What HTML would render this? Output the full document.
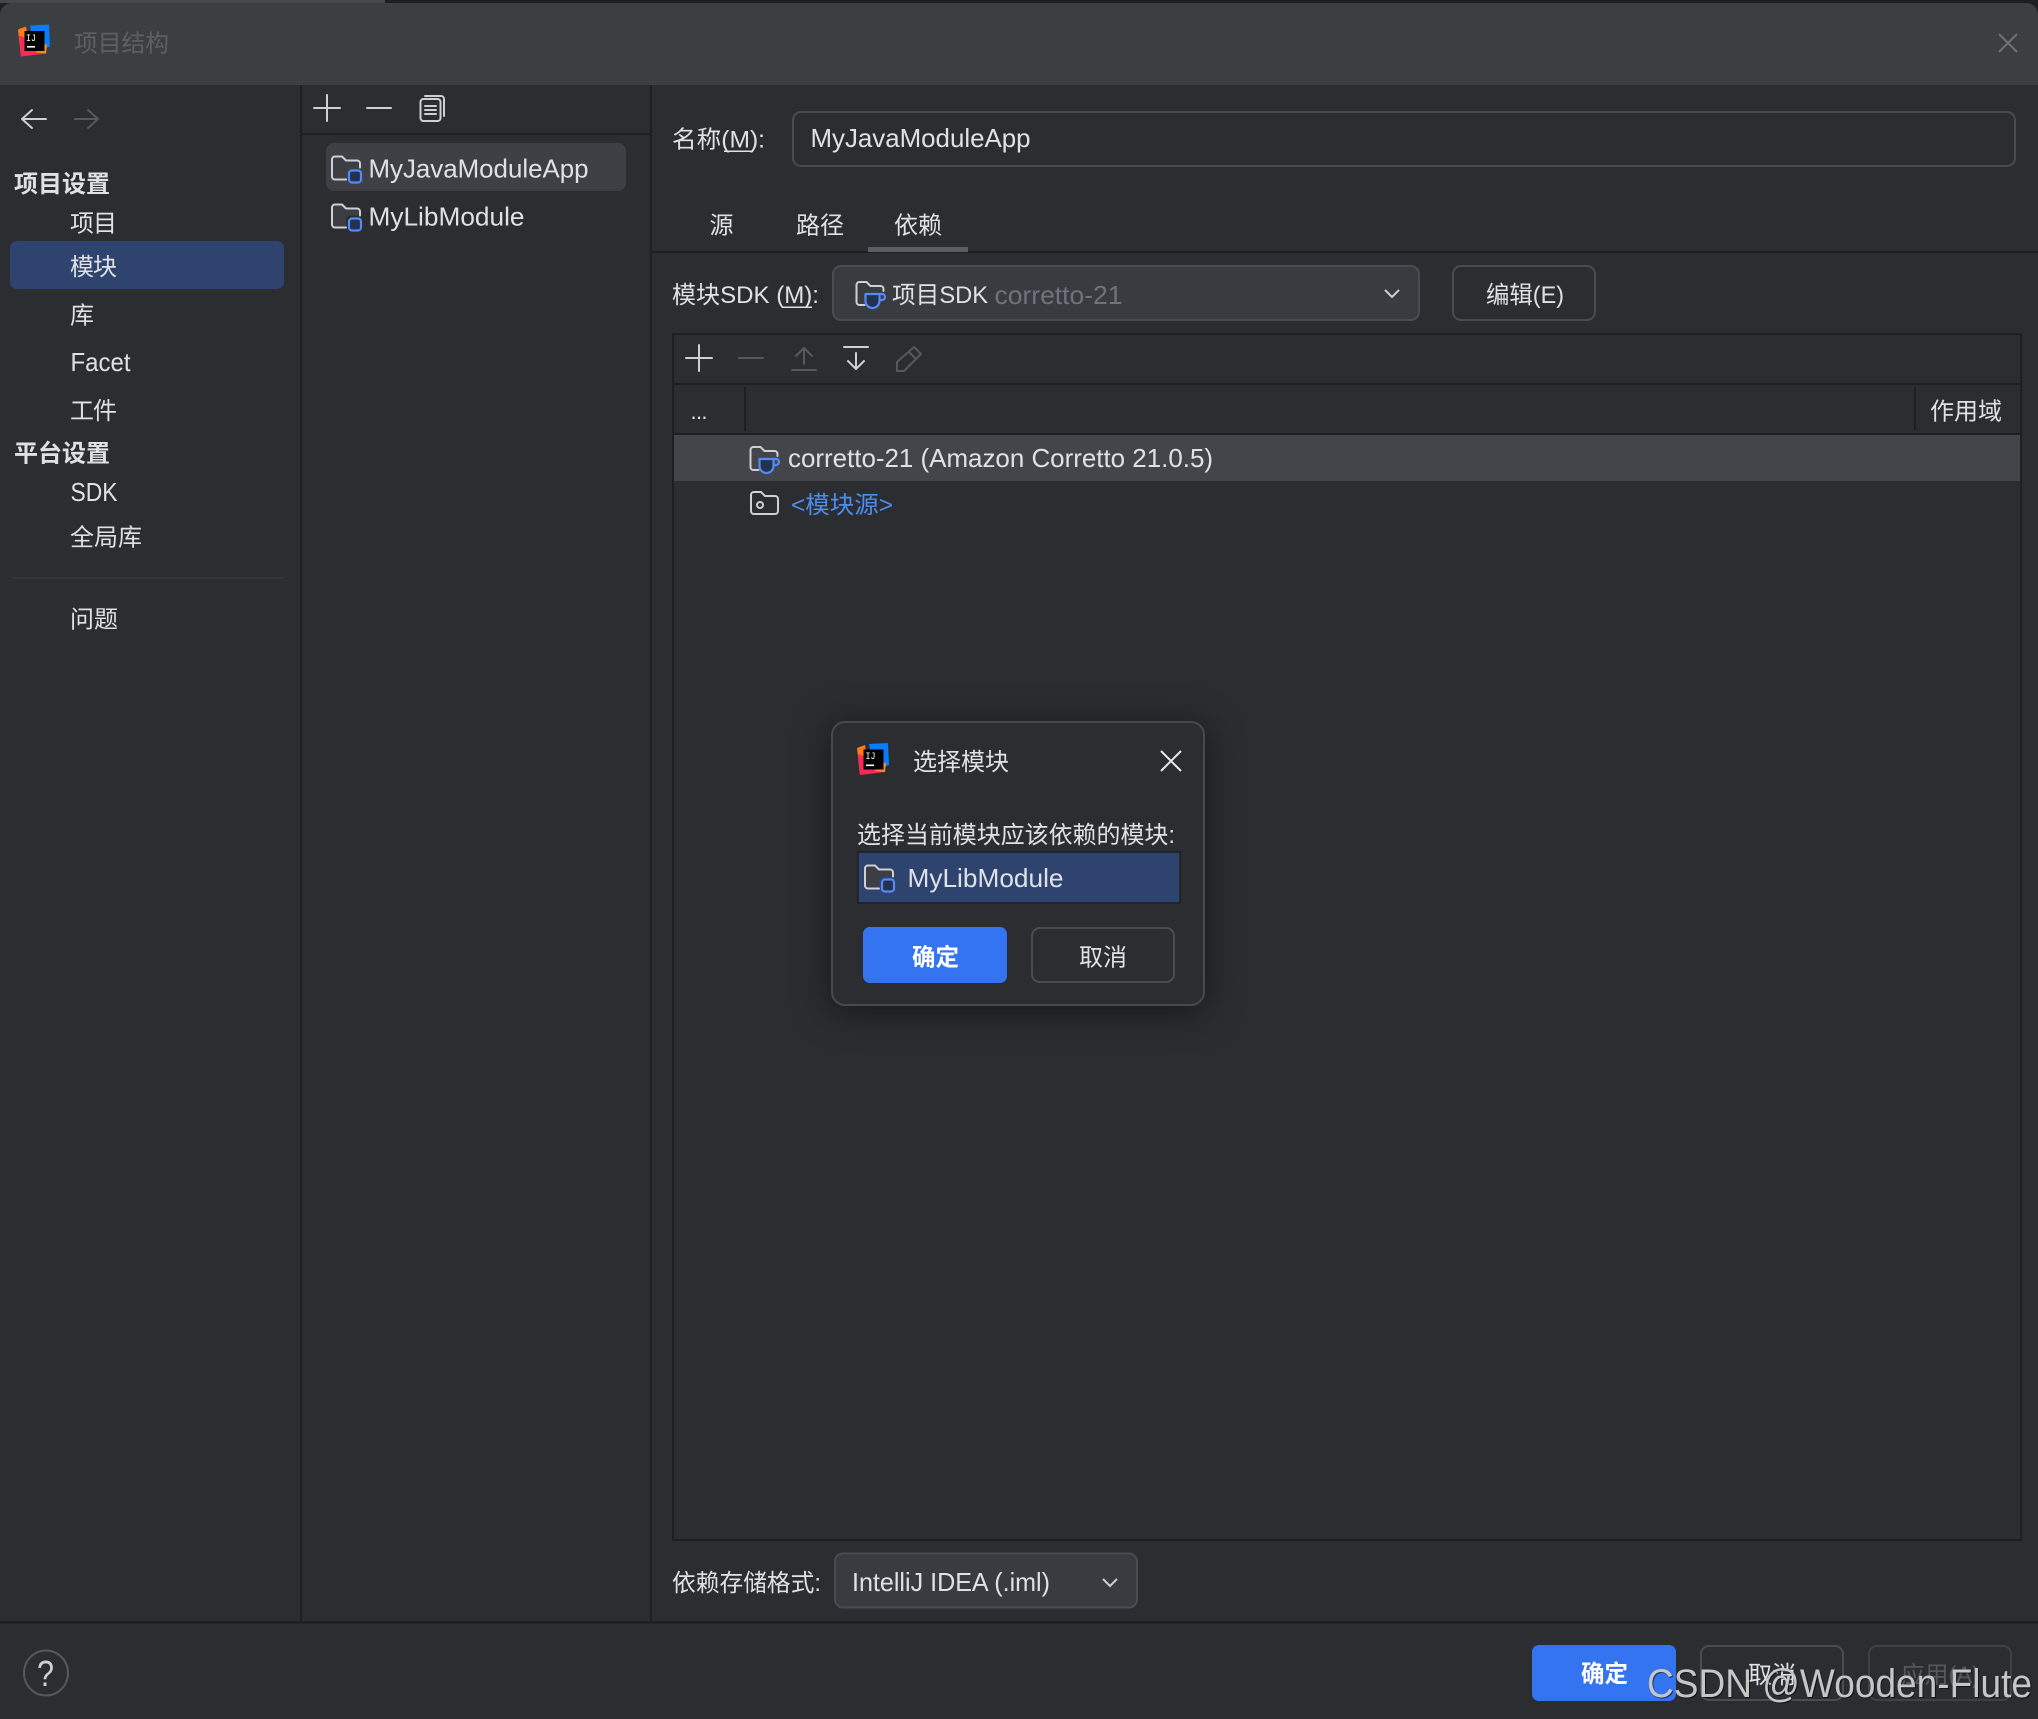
<!DOCTYPE html>
<html lang="zh-CN">
<head>
<meta charset="utf-8">
<title>项目结构</title>
<style>
html,body{margin:0;padding:0;background:#1e1f22;width:2038px;height:1719px;overflow:hidden}
svg{display:block}
text{font-family:"Liberation Sans","Noto Sans CJK SC",sans-serif;font-size:24px;fill:#dfe1e5;white-space:pre}
.l{font-size:26px}
.b{font-weight:700}
.ic{fill:none;stroke:#ced0d6;stroke-width:2;stroke-linecap:round;stroke-linejoin:round}
.dim{fill:none;stroke:#55585c;stroke-width:2;stroke-linecap:round;stroke-linejoin:round}
</style>
</head>
<body>
<svg width="2038" height="1719" viewBox="0 0 2038 1719" xmlns="http://www.w3.org/2000/svg">
<defs>
<symbol id="logo" viewBox="0 0 32 32" overflow="visible">
  <path d="M0 5L8 2 12 30 3 32z" fill="#ff7a1a"/>
  <path d="M1 11L20 18 28 29 3 32z" fill="#fe2857"/>
  <path d="M12 1L31 0 32 22 27 24 14 12z" fill="#087cfa"/>
  <path d="M20 18L29 20 28 29 18 28z" fill="#ff8a1f"/>
  <rect x="6.5" y="6.5" width="20" height="20" fill="#000"/>
  <rect x="9" y="21.5" width="8" height="1.6" fill="#fff"/>
</symbol>
<symbol id="mod" viewBox="0 0 32 30" overflow="visible">
  <path d="M15 24H4A3 3 0 0 1 1 21V4A3 3 0 0 1 4 1H11L15 5H26A3 3 0 0 1 29 8V12H19A4 4 0 0 0 15 16Z" fill="#3c3e43"/>
  <path d="M15 24H4A3 3 0 0 1 1 21V4A3 3 0 0 1 4 1H11L15 5H26A3 3 0 0 1 29 8V12" class="ic"/>
  <rect x="18" y="15" width="12" height="12" rx="3" fill="#25324d" stroke="#548af7" stroke-width="2.2"/>
</symbol>
<symbol id="jdk" viewBox="0 0 32 30" overflow="visible">
  <path d="M9 24H4A3 3 0 0 1 1 21V4A3 3 0 0 1 4 1H11L15 5H25A3 3 0 0 1 28 8V10" class="ic"/>
  <path d="M10 13H24V20A7 7 0 0 1 10 20Z" fill="#25324d" stroke="#548af7" stroke-width="2.2" stroke-linejoin="round"/>
  <path d="M24 13H26.500A2.700 2.700 0 0 1 26.500 19H24" fill="none" stroke="#548af7" stroke-width="2.2"/>
</symbol>
</defs>

<!-- window frame -->
<rect x="0" y="0" width="385" height="3" fill="#46484c"/>
<path d="M0 15A12 12 0 0 1 12 3H2026A12 12 0 0 1 2038 15V1719H0Z" fill="#2b2d30"/>
<path d="M0 15A12 12 0 0 1 12 3H2026A12 12 0 0 1 2038 15V85H0Z" fill="#3c3f41"/>
<use href="#logo" x="18" y="24" width="32" height="33"/>
<text x="26" y="41" textLength="10" lengthAdjust="spacingAndGlyphs" style="font-size:10px;font-family:'Liberation Mono',monospace;fill:#fff">IJ</text>
<text x="74" y="51.500" textLength="95" lengthAdjust="spacingAndGlyphs" style="fill:#5d6063">项目结构</text>
<path d="M1999 34L2017 52M2017 34L1999 52" fill="none" stroke="#6f7275" stroke-width="2"/>

<!-- structure lines -->
<rect x="300" y="85" width="2" height="1537" fill="#1e1f22"/>
<rect x="650" y="85" width="2" height="1537" fill="#1e1f22"/>
<rect x="302" y="133" width="348" height="2" fill="#1e1f22"/>
<rect x="652" y="251" width="1386" height="2" fill="#1e1f22"/>
<rect x="0" y="1621" width="2038" height="2.500" fill="#1e1f22"/>

<!-- sidebar -->
<path d="M46 119H23M32 110L22 119 32 128" class="ic"/>
<path d="M75 119H97M88 110L98 119 88 128" class="dim"/>
<text x="14" y="192" class="b" textLength="96" lengthAdjust="spacingAndGlyphs">项目设置</text>
<text x="70" y="231.500" textLength="47">项目</text>
<rect x="10" y="241" width="274" height="48" rx="7" fill="#2e436e"/>
<text x="70" y="275" textLength="47">模块</text>
<text x="70" y="323.500">库</text>
<text x="70.500" y="371" textLength="60" lengthAdjust="spacingAndGlyphs" class="l">Facet</text>
<text x="70" y="419" textLength="47">工件</text>
<text x="14" y="461.500" class="b" textLength="96" lengthAdjust="spacingAndGlyphs">平台设置</text>
<text x="70.500" y="501" textLength="47" lengthAdjust="spacingAndGlyphs" class="l">SDK</text>
<text x="70" y="545.500" textLength="72">全局库</text>
<rect x="12" y="577" width="272" height="2" fill="#333539"/>
<text x="70" y="627.500" textLength="48">问题</text>

<!-- module list -->
<path d="M327 95V121M314 108H340" class="ic"/>
<path d="M367 108H391" class="ic"/>
<rect x="420.500" y="99" width="20" height="22" rx="3" class="ic"/>
<path d="M425 96H441A3 3 0 0 1 444 99V116" class="ic"/>
<path d="M425 106H436M425 110H436M425 114H436" class="ic"/>
<rect x="326" y="143" width="300" height="48" rx="8" fill="#3e4045"/>
<use href="#mod" x="331" y="155.500" width="32" height="30"/>
<text x="368.500" y="177.500" class="l" textLength="220" lengthAdjust="spacingAndGlyphs">MyJavaModuleApp</text>
<use href="#mod" x="331" y="203.500" width="32" height="30"/>
<text x="368.500" y="225.500" class="l" textLength="156" lengthAdjust="spacingAndGlyphs">MyLibModule</text>

<!-- name -->
<text x="672" y="147.500" textLength="93" lengthAdjust="spacingAndGlyphs">名称(M):</text>
<rect x="724" y="150.500" width="29" height="1.500" fill="#dfe1e5"/>
<rect x="793" y="112" width="1222" height="54" rx="8" fill="#2b2d30" stroke="#4a4c51" stroke-width="2"/>
<text x="810.500" y="147" class="l" textLength="220" lengthAdjust="spacingAndGlyphs">MyJavaModuleApp</text>

<!-- tabs -->
<text x="709.500" y="233.500">源</text>
<text x="796" y="233.500" textLength="48">路径</text>
<text x="894" y="233.500" textLength="48">依赖</text>
<rect x="868" y="247" width="100" height="5" fill="#5a5d63"/>

<!-- SDK row -->
<text x="672" y="303" textLength="147" lengthAdjust="spacingAndGlyphs">模块SDK (M):</text>
<rect x="783" y="306.500" width="29" height="1.500" fill="#dfe1e5"/>
<rect x="833" y="266" width="586" height="54" rx="8" fill="#393b40" stroke="#4a4c51" stroke-width="2"/>
<use href="#jdk" x="855.500" y="281" width="32" height="30"/>
<text x="892" y="303" textLength="96" lengthAdjust="spacingAndGlyphs">项目SDK</text>
<text x="994.500" y="304" class="l" textLength="128" lengthAdjust="spacingAndGlyphs" style="fill:#6f737a">corretto-21</text>
<path d="M1385 290L1392 297 1399 290" fill="none" stroke="#ced0d6" stroke-width="2"/>
<rect x="1453" y="266" width="142" height="54" rx="8" fill="#2b2d30" stroke="#4a4c51" stroke-width="2"/>
<text x="1486" y="303" textLength="78" lengthAdjust="spacingAndGlyphs">编辑(E)</text>

<!-- dependency table -->
<rect x="673" y="334" width="1348" height="1206" fill="#2b2d30" stroke="#1e1f22" stroke-width="2"/>
<rect x="674" y="383" width="1347" height="2" fill="#1e1f22"/>
<rect x="674" y="433" width="1347" height="2" fill="#1e1f22"/>
<rect x="744" y="387" width="2" height="44" fill="#1e1f22"/>
<rect x="1914" y="387" width="2" height="44" fill="#1e1f22"/>
<path d="M699 345V371M686 358H712" class="ic"/>
<path d="M739 358H763" class="dim"/>
<path d="M792 370H816M804 348V364M796 356L804 348 812 356" class="dim"/>
<path d="M844 347H868M856 353V369M848 361L856 369 864 361" class="ic"/>
<path d="M897 371V362L914 347 921 354 904 371ZM909 352L916 359" class="dim"/>
<text x="690.500" y="419" textLength="17" style="font-size:22px">...</text>
<text x="1930" y="419.500" textLength="72">作用域</text>
<rect x="674" y="435" width="1346" height="46" fill="#43454a"/>
<use href="#jdk" x="749.500" y="446" width="32" height="30"/>
<text x="788" y="467" class="l" textLength="425" lengthAdjust="spacingAndGlyphs">corretto-21 (Amazon Corretto 21.0.5)</text>
<path d="M751 495A3 3 0 0 1 754 492H761L765 496H775A3 3 0 0 1 778 499V511A3 3 0 0 1 775 514H754A3 3 0 0 1 751 511Z" class="ic"/>
<circle cx="760" cy="505" r="3" class="ic"/>
<text x="791" y="513" textLength="102" lengthAdjust="spacingAndGlyphs" style="fill:#4a8ef0">&lt;模块源&gt;</text>

<!-- format row -->
<text x="672" y="1591" textLength="149" lengthAdjust="spacingAndGlyphs">依赖存储格式:</text>
<rect x="835" y="1553.500" width="302" height="54" rx="8" fill="#393b40" stroke="#4a4c51" stroke-width="2"/>
<text x="852" y="1591" class="l" textLength="198" lengthAdjust="spacingAndGlyphs">IntelliJ IDEA (.iml)</text>
<path d="M1103 1579L1110 1586 1117 1579" fill="none" stroke="#ced0d6" stroke-width="2"/>

<!-- footer -->
<ellipse cx="46" cy="1673" rx="22" ry="22.500" fill="none" stroke="#55585c" stroke-width="2"/>
<text x="37" y="1686" textLength="17" lengthAdjust="spacingAndGlyphs" style="font-size:36px;fill:#ced0d6">?</text>
<rect x="1532" y="1645" width="144" height="56" rx="7" fill="#3574f0"/>
<text x="1581" y="1682" class="b" textLength="47" lengthAdjust="spacingAndGlyphs" style="fill:#fff">确定</text>
<rect x="1701" y="1646" width="142" height="54" rx="8" fill="none" stroke="#4a4c51" stroke-width="2"/>
<text x="1748" y="1683" textLength="48">取消</text>
<rect x="1869" y="1646" width="142" height="54" rx="8" fill="none" stroke="#3f4145" stroke-width="2"/>
<text x="1901" y="1683" textLength="79" lengthAdjust="spacingAndGlyphs" style="fill:#55585c">应用(A)</text>

<!-- modal dialog -->
<rect x="832" y="722" width="372" height="283" rx="13" fill="#2b2d30" stroke="#47494e" stroke-width="2" style="filter:drop-shadow(0 5px 18px rgba(0,0,0,.5))"/>
<use href="#logo" x="857" y="743" width="32" height="32"/>
<text x="865.500" y="759" textLength="10" lengthAdjust="spacingAndGlyphs" style="font-size:10px;font-family:'Liberation Mono',monospace;fill:#fff">IJ</text>
<text x="913" y="770" textLength="96">选择模块</text>
<path d="M1161 751L1181 771M1181 751L1161 771" fill="none" stroke="#e6e7ea" stroke-width="2"/>
<text x="857" y="843" textLength="318" lengthAdjust="spacingAndGlyphs">选择当前模块应该依赖的模块:</text>
<rect x="858" y="852" width="322" height="51" fill="#2e436e" stroke="#1e1f22" stroke-width="1.500"/>
<use href="#mod" x="864" y="864.500" width="32" height="30"/>
<text x="907.500" y="887" class="l" textLength="156" lengthAdjust="spacingAndGlyphs">MyLibModule</text>
<rect x="863" y="927" width="144" height="56" rx="7" fill="#3574f0"/>
<text x="912" y="965.500" class="b" textLength="47" lengthAdjust="spacingAndGlyphs" style="fill:#fff">确定</text>
<rect x="1032" y="928" width="142" height="54" rx="8" fill="#2b2d30" stroke="#4a4c51" stroke-width="2"/>
<text x="1079" y="965.500" textLength="48">取消</text>

<!-- watermark -->
<text x="1647" y="1697" textLength="385" lengthAdjust="spacingAndGlyphs" style="font-size:40px;fill:#c6c6c6;filter:drop-shadow(1px 1px 0 rgba(0,0,0,.55))">CSDN @Wooden-Flute</text>
</svg>
</body>
</html>
